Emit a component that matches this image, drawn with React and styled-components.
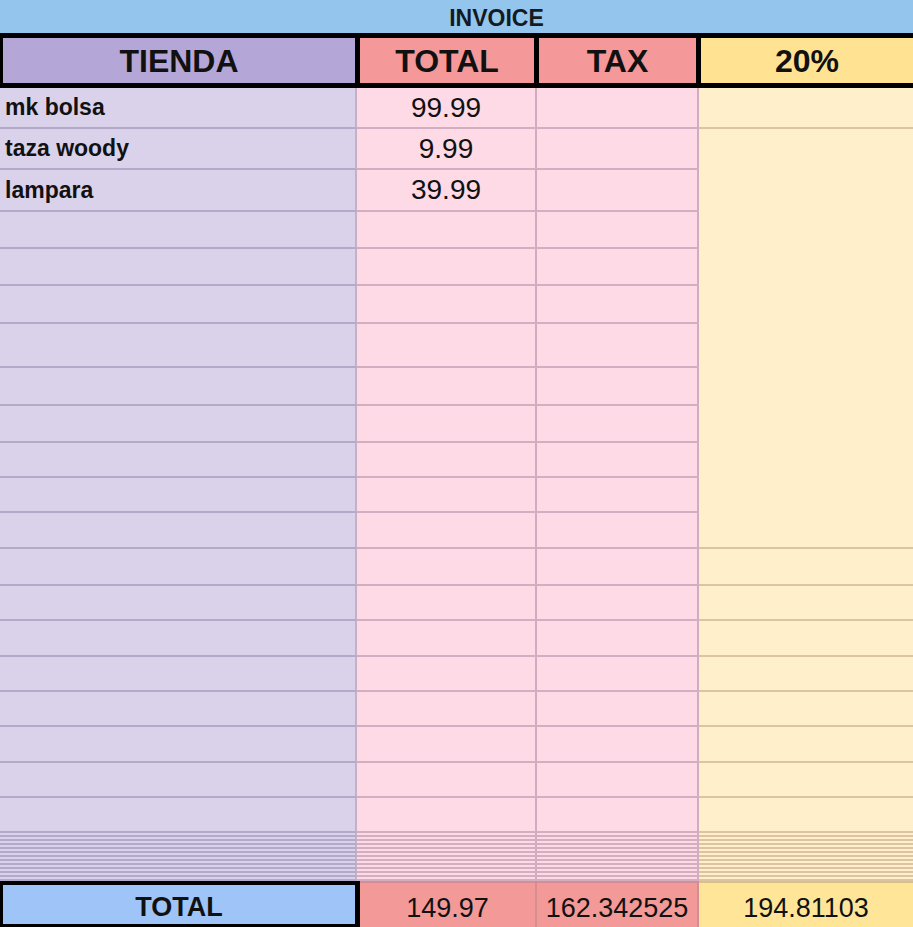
import React from 'react';
import styled, { createGlobalStyle } from 'styled-components';

const GlobalStyle = createGlobalStyle`
  html, body {
    margin: 0;
    padding: 0;
    background: #fff;
    overflow: hidden;
  }
  body {
    font-family: "Liberation Sans", Arial, sans-serif;
    color: #111;
  }
`;

const tones = {
  purple: { body: '#dad2ea', line: '#b3a9c8', side: '#c7b0c6', head: '#b4a7d8' },
  pink: { body: '#fedae6', line: '#d3aec0', side: '#d1acbf', head: '#f4989a' },
  yellow: { body: '#fff0cb', line: '#dbc3a4', side: '#dbc3a4', head: '#ffe393' },
};

const rowHeights = [41, 41, 42, 37, 37, 38, 44, 38, 37, 35, 35, 36, 37, 35, 36, 35, 35, 36, 35, 35];
const hiddenRows = 12;

const items = [
  { name: 'mk bolsa', total: '99.99' },
  { name: 'taza woody', total: '9.99' },
  { name: 'lampara', total: '39.99' },
];

const Sheet = styled.div`
  width: 913px;
  height: 927px;
  display: flex;
  flex-direction: column;
  overflow: hidden;
`;

const TitleBar = styled.div`
  height: 33px;
  flex: none;
  box-sizing: border-box;
  background: #94c6ed;
  display: flex;
  align-items: center;
  justify-content: center;
  padding: 4px 0 0 80px;
  font-size: 23px;
  font-weight: 700;
  color: #151a22;
`;

const HeaderRow = styled.div`
  flex: none;
  display: grid;
  grid-template-columns: 357px 179px 162px 1fr;
  height: 45px;
  border-top: 5px solid #000;
  border-bottom: 5px solid #000;
  border-left: 3px solid #000;
`;

const HeadCell = styled.div`
  background: ${p => tones[p.$tone].head};
  border-right: ${p => (p.$last ? 'none' : '5px solid #000')};
  display: flex;
  align-items: center;
  justify-content: center;
  padding-top: 2px;
  font-size: 32px;
  font-weight: 700;
  color: #111;
`;

const Body = styled.div`
  flex: none;
  display: grid;
  grid-template-columns: 357px 180px 162px 1fr;
  grid-template-rows: ${rowHeights.map(h => `${h}px`).join(' ')} repeat(${hiddenRows}, 4px);
`;

const Cell = styled.div`
  grid-column: ${p => p.$col};
  grid-row: span ${p => p.$span || 1};
  background: ${p => tones[p.$tone].body};
  border-bottom: 2px solid ${p => tones[p.$tone].line};
  border-right: ${p => (p.$col === 4 ? 'none' : `2px solid ${tones[p.$tone].side}`)};
  display: flex;
  align-items: center;
  justify-content: ${p => (p.$col === 1 ? 'flex-start' : 'center')};
  padding-left: ${p => (p.$col === 1 ? '5px' : '0')};
  min-height: 0;
  overflow: hidden;
`;

const ItemName = styled.span`
  font-size: 23px;
  font-weight: 700;
  line-height: 1;
`;

const Amount = styled.span`
  font-size: 28px;
  line-height: 1;
`;

const Footer = styled.div`
  flex: 1;
  display: grid;
  grid-template-columns: 360px 177px 162px 1fr;
`;

const FootLabel = styled.div`
  background: #9fc5f8;
  border: 3px solid #000;
  border-top-width: 4px;
  border-right-width: 5px;
  display: flex;
  align-items: center;
  justify-content: center;
  padding-top: 6px;
  font-size: 27px;
  font-weight: 700;
`;

const FootValue = styled.div`
  background: ${p => (p.$tone === 'yellow' ? '#ffe597' : '#f39997')};
  border-top: 2px solid ${p => (p.$tone === 'yellow' ? '#d9c08a' : '#d48e93')};
  border-right: ${p => (p.$tone === 'yellow' ? 'none' : '2px solid #d48e93')};
  display: flex;
  align-items: center;
  justify-content: center;
  font-size: 27px;
  padding-top: 6px;
`;

const BodyRows = () => {
  const total = rowHeights.length + hiddenRows;
  const rows = [];
  for (let i = 0; i < total; i++) {
    const item = items[i];
    rows.push(
      <React.Fragment key={i}>
        <Cell $col={1} $tone="purple">{item && <ItemName>{item.name}</ItemName>}</Cell>
        <Cell $col={2} $tone="pink">{item && <Amount>{item.total}</Amount>}</Cell>
        <Cell $col={3} $tone="pink" />
        {i === 0 && <Cell $col={4} $tone="yellow" />}
        {i === 1 && <Cell $col={4} $tone="yellow" $span={11} />}
        {i >= 12 && <Cell $col={4} $tone="yellow" />}
      </React.Fragment>
    );
  }
  return rows;
};

export default function App() {
  return (
    <>
      <GlobalStyle />
      <Sheet>
        <TitleBar>INVOICE</TitleBar>
        <HeaderRow>
          <HeadCell $tone="purple">TIENDA</HeadCell>
          <HeadCell $tone="pink">TOTAL</HeadCell>
          <HeadCell $tone="pink">TAX</HeadCell>
          <HeadCell $tone="yellow" $last>20%</HeadCell>
        </HeaderRow>
        <Body>
          <BodyRows />
        </Body>
        <Footer>
          <FootLabel>TOTAL</FootLabel>
          <FootValue $tone="pink">149.97</FootValue>
          <FootValue $tone="pink">162.342525</FootValue>
          <FootValue $tone="yellow">194.81103</FootValue>
        </Footer>
      </Sheet>
    </>
  );
}
